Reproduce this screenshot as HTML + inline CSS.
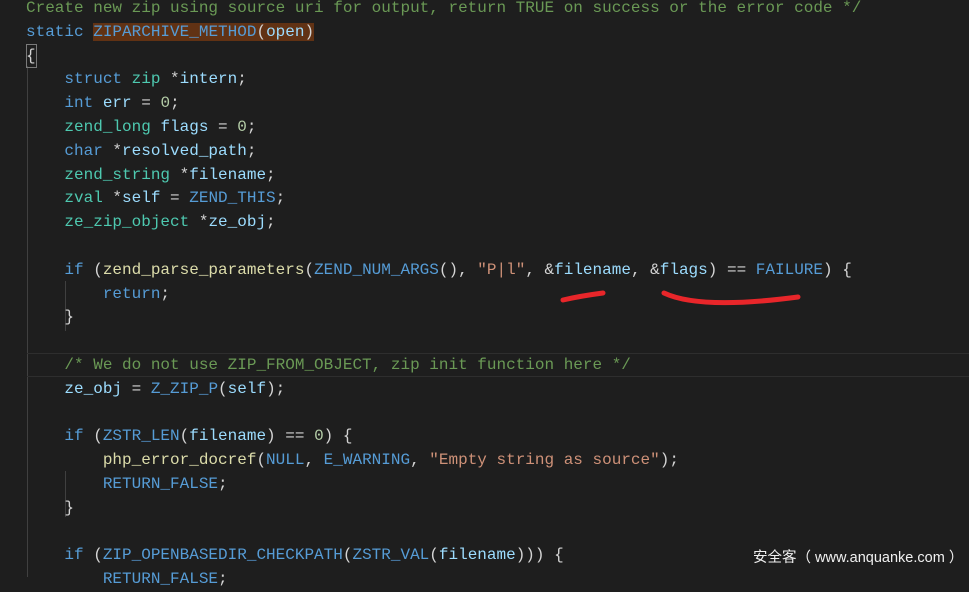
<!DOCTYPE html>
<html><head><meta charset="utf-8"><style>
html,body{margin:0;padding:0;background:#1e1e1e;width:969px;height:577px;overflow:hidden}
#c{position:absolute;left:26px;top:-3px;font:16px/23.8px "Liberation Mono",monospace;color:#d4d4d4;white-space:pre}
.c{color:#6a9955}.k{color:#569cd6}.t{color:#4ec9b0}.v{color:#9cdcfe}.f{color:#dcdcaa}.n{color:#b5cea8}.s{color:#ce9178}
.hl{background:#613214}
.g{position:absolute;width:1px;background:#404040}
</style></head><body>
<div class="g" style="left:27px;top:66px;height:511px"></div>
<div class="g" style="left:65px;top:281px;height:50px"></div>
<div class="g" style="left:65px;top:471px;height:46px"></div>
<div style="position:absolute;left:27px;top:353px;width:942px;height:22px;border-top:1px solid #2e2e2e;border-bottom:1px solid #2e2e2e"></div>
<div style="position:absolute;left:26px;top:44px;width:9px;height:22px;border:1px solid #7a7a7a"></div>
<div id="c"><span class="c">Create new zip using source uri for output, return TRUE on success or the error code */</span>
<span class="k">static</span> <span class="hl"><span class="k">ZIPARCHIVE_METHOD</span>(<span class="v">open</span>)</span>
{
    <span class="k">struct</span> <span class="t">zip</span> *<span class="v">intern</span>;
    <span class="k">int</span> <span class="v">err</span> = <span class="n">0</span>;
    <span class="t">zend_long</span> <span class="v">flags</span> = <span class="n">0</span>;
    <span class="k">char</span> *<span class="v">resolved_path</span>;
    <span class="t">zend_string</span> *<span class="v">filename</span>;
    <span class="t">zval</span> *<span class="v">self</span> = <span class="k">ZEND_THIS</span>;
    <span class="t">ze_zip_object</span> *<span class="v">ze_obj</span>;

    <span class="k">if</span> (<span class="f">zend_parse_parameters</span>(<span class="k">ZEND_NUM_ARGS</span>(), <span class="s">"P|l"</span>, &amp;<span class="v">filename</span>, &amp;<span class="v">flags</span>) == <span class="k">FAILURE</span>) {
        <span class="k">return</span>;
    }

    <span class="c">/* We do not use ZIP_FROM_OBJECT, zip init function here */</span>
    <span class="v">ze_obj</span> = <span class="k">Z_ZIP_P</span>(<span class="v">self</span>);

    <span class="k">if</span> (<span class="k">ZSTR_LEN</span>(<span class="v">filename</span>) == <span class="n">0</span>) {
        <span class="f">php_error_docref</span>(<span class="k">NULL</span>, <span class="k">E_WARNING</span>, <span class="s">"Empty string as source"</span>);
        <span class="k">RETURN_FALSE</span>;
    }

    <span class="k">if</span> (<span class="k">ZIP_OPENBASEDIR_CHECKPATH</span>(<span class="k">ZSTR_VAL</span>(<span class="v">filename</span>))) {
        <span class="k">RETURN_FALSE</span>;
</div>
<svg style="position:absolute;left:0;top:0" width="969" height="577">
<path d="M563 300 Q580 296 603 293" stroke="#e8262a" stroke-width="5" fill="none" stroke-linecap="round"/>
<path d="M664 293 Q700 310 798 297" stroke="#e8262a" stroke-width="5" fill="none" stroke-linecap="round"/>
</svg>
<div style="position:absolute;left:753px;top:548px;font:14.5px/20px 'Liberation Sans','Noto Sans CJK SC',sans-serif;color:#f0f0f0;white-space:pre">安全客（ www.anquanke.com ）</div>
</body></html>
